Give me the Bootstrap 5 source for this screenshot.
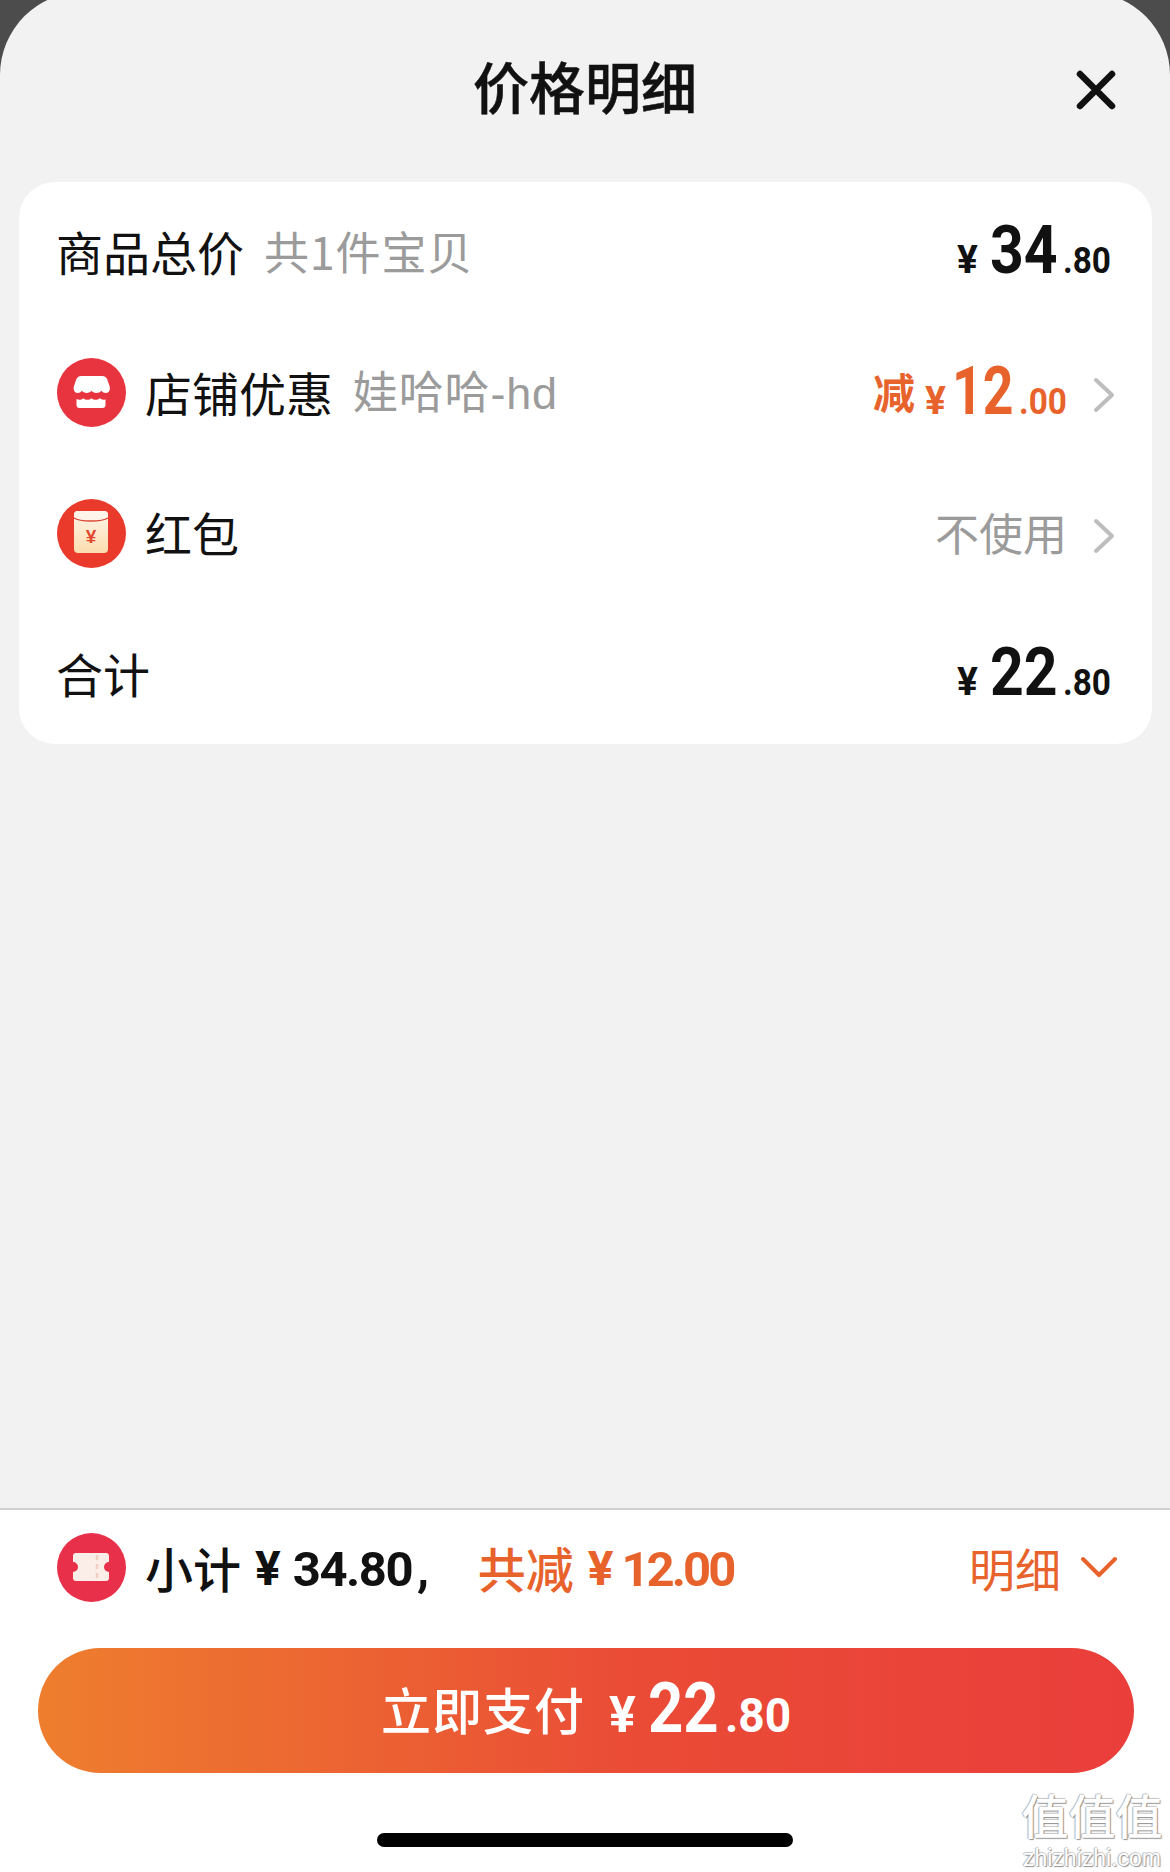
<!DOCTYPE html>
<html lang="zh-CN">
<head>
<meta charset="utf-8">
<title>价格明细</title>
<link href="https://cdn.jsdelivr.net/npm/bootstrap@5.3.0/dist/css/bootstrap.min.css" rel="stylesheet">
<style>
html,body{margin:0;height:1872px;background:#4c4c4c;overflow:hidden}
body{font-family:"Liberation Sans","Noto Sans CJK SC",sans-serif;color:#111}
.pd-sheet{height:1880px;width:1170px;margin-top:-8px;background:#f2f2f2;border-radius:83px 83px 0 0;position:relative}
.pd-head{height:190px;display:grid;grid-template-columns:1fr auto 1fr;padding:8px 0 13px}
.pd-title{font-size:56px;font-weight:500;-webkit-text-stroke:.5px #111;line-height:1;font-family:"Noto Sans CJK SC",sans-serif}
.pd-close{width:40px;height:40px;margin-right:54px;margin-top:10px}
.pd-card{margin:0 18px 0 19px;height:562px;background:#fff;border-radius:36px}
.pd-row{height:140.5px;padding:0 37px 0 38px}
.pd-row.pd-noicon{padding-left:37px;padding-right:41px}
.pd-label{font-size:47px;line-height:1;margin-bottom:3px;font-family:"Noto Sans CJK SC",sans-serif}
.pd-sub{font-size:45px;line-height:1;margin-bottom:3px;color:#9b9b9b;margin-left:20px;letter-spacing:.8px;font-family:"Noto Sans CJK SC",sans-serif}
.pd-sub-latin{font-family:"Liberation Sans",sans-serif}
.pd-icon{width:69px;height:69px;flex:none;margin-right:19px}
.pd-num{font-family:"Roboto",sans-serif;font-weight:700;line-height:1;white-space:nowrap}
.pd-price{margin-bottom:3px}
.pd-yen{font-size:39px;margin-right:12px}
.pd-big{font-size:67px;display:inline-block;transform:scaleX(.88);transform-origin:0 50%;margin-right:-9px}
.pd-big-one{transform:scaleX(.8);margin-right:-15px}
.pd-yen-one{margin-right:6px}
.pd-cents{font-size:37px;display:inline-block;transform:scaleX(.9);transform-origin:0 50%;margin:0 -5px 0 5px}
.pd-orange{color:#e8622c}
.pd-cut{font-size:42px;font-weight:700;line-height:1;margin-right:10px;font-family:"Noto Sans CJK SC",sans-serif}
.pd-chev{width:22px;height:36px;margin:5px 0 0 26px;flex:none}
.pd-muted{font-size:44px;color:#9b9b9b;line-height:1;margin-bottom:3px;font-family:"Noto Sans CJK SC",sans-serif}
.pd-foot{height:364px;background:#fff;border-top:2px solid #d0d0d0;padding-top:21px}
.pd-sum{height:72px;padding:0 53px 0 57px}
.pd-sum-txt{font-size:48px;font-weight:500;line-height:1;font-family:"Noto Sans CJK SC",sans-serif}
.pd-sum-num{font-size:49px;font-weight:700;letter-spacing:-.03em;margin-top:4px}
.pd-sum-comma{margin-left:5px}
.pd-sum-one{letter-spacing:-.06em;margin-left:-4px}
.pd-sum-yen{font-size:48px;font-weight:700;margin:4px 12px 0 14px}
.pd-gap{margin-left:50px}
.pd-detail{font-size:46px;line-height:1;font-family:"Noto Sans CJK SC",sans-serif}
.pd-arrow{margin-left:20px}
.pd-pay{display:flex;align-items:center;justify-content:center;margin:45px 36px 0 38px;height:125px;width:1096px;border:0;border-radius:63px;padding:0 0 6px 0;background:linear-gradient(90deg,#ee7e2e,#ea4b36 55%,#ea3e3b);color:#fff}
.pd-pay-txt{font-size:50px;font-weight:500;line-height:1;letter-spacing:1px;margin-right:24px;font-family:"Noto Sans CJK SC",sans-serif}
.pd-pay-num{font-weight:700}
.pd-pay-yen{font-size:50px;margin-right:12px}
.pd-pay-big{font-size:70px;display:inline-block;transform:scaleX(.88);transform-origin:0 50%;margin-right:-10px}
.pd-pay-cents{font-size:48px;display:inline-block;transform:scaleX(.96);transform-origin:0 50%;margin:0 -3px 0 7px}
.pd-home{width:416px;height:14px;border-radius:7px;background:#000;margin:60px 0 0 377px}
.pd-mark{position:absolute;left:1021px;top:1798px;width:142px;text-align:center;color:#fff;line-height:1;text-shadow:1px 1px 1px #8f8f8f,-1px 0 1px #b5b5b5,0 -1px 1px #c8c8c8}
.pd-mark-cn{font-size:47px;font-family:"Noto Sans CJK SC",sans-serif;font-weight:500;display:block;height:57px}
.pd-mark-en{font-size:23px;font-family:"Liberation Sans",sans-serif;display:block}
</style>
</head>
<body>
<div class="pd-sheet d-flex flex-column">
  <header class="pd-head align-items-center">
    <span></span>
    <div class="pd-title">价格明细</div>
    <div class="d-flex justify-content-end">
      <svg class="pd-close" viewBox="0 0 40 40" aria-label="关闭"><path d="M4 4 36 36M36 4 4 36" stroke="#111" stroke-width="6.500" stroke-linecap="round" fill="none"/></svg>
    </div>
  </header>

  <section class="pd-card">
    <div class="pd-row pd-noicon d-flex align-items-center justify-content-between">
      <div class="d-flex align-items-center"><span class="pd-label">商品总价</span><span class="pd-sub">共1件宝贝</span></div>
      <div class="pd-num pd-price d-flex align-items-baseline"><span class="pd-yen">¥</span><span class="pd-big">34</span><span class="pd-cents">.80</span></div>
    </div>
    <div class="pd-row d-flex align-items-center justify-content-between">
      <div class="d-flex align-items-center">
        <svg class="pd-icon" viewBox="0 0 69 69"><circle cx="34.500" cy="34.500" r="34.500" fill="#e8343f"/><path d="M24 18h21c3 0 4.500 1.500 5.500 4l2 6c1.200 3.500-.5 7-3.500 7-2.200 0-3.300-.8-4.600-2.200-1.400 1.400-2.800 2.200-5.200 2.200s-3.400-.9-4.700-2.200c-1.300 1.300-2.500 2.200-4.800 2.200s-3.500-.9-4.900-2.200c-1.200 1.400-2.200 2.200-4.300 2.200-3 0-4.600-3.500-3.500-7l2-6c1-2.500 2.500-4 5.500-4z" fill="#fff"/><path d="M19.500 41c2.300 1.300 4.700 1 6.800-.7 2.500 2 5.700 2 8.200 0 2.500 2 5.700 2 8.200 0 1.900 1.600 3.900 1.900 5.800.9V47a3 3 0 0 1-3 3H22.500a3 3 0 0 1-3-3z" fill="#fff"/></svg>
        <span class="pd-label">店铺优惠</span><span class="pd-sub">娃哈哈<span class="pd-sub-latin">-hd</span></span>
      </div>
      <div class="d-flex align-items-center">
        <div class="pd-num pd-price pd-orange d-flex align-items-baseline"><span class="pd-cut align-self-center">减</span><span class="pd-yen pd-yen-one">¥</span><span class="pd-big pd-big-one">12</span><span class="pd-cents">.00</span></div>
        <svg class="pd-chev" viewBox="0 0 22 36"><path d="M3 3 19 18 3 33" stroke="#bdbdbd" stroke-width="4" fill="none" stroke-linecap="round" stroke-linejoin="round"/></svg>
      </div>
    </div>
    <div class="pd-row d-flex align-items-center justify-content-between">
      <div class="d-flex align-items-center">
        <svg class="pd-icon" viewBox="0 0 69 69"><defs><linearGradient id="pdCream" x1="0" y1="0" x2="0" y2="1"><stop offset="0" stop-color="#fff6ea"/><stop offset="1" stop-color="#fcdcae"/></linearGradient></defs><circle cx="34.500" cy="34.500" r="34.500" fill="#ea3a2c"/><rect x="17" y="12" width="34" height="42" rx="4" fill="url(#pdCream)"/><path d="M17 19c6 4 28 4 34 0v-3a4 4 0 0 0-4-4H21a4 4 0 0 0-4 4z" fill="#fff4ea"/><path d="M17 19c6 4 28 4 34 0" stroke="#d9412f" stroke-width="1.500" fill="none"/><text x="34" y="44" text-anchor="middle" font-family="Liberation Sans, sans-serif" font-weight="700" font-size="19" fill="#e2472f">¥</text></svg>
        <span class="pd-label">红包</span>
      </div>
      <div class="d-flex align-items-center">
        <span class="pd-muted">不使用</span>
        <svg class="pd-chev" viewBox="0 0 22 36"><path d="M3 3 19 18 3 33" stroke="#bdbdbd" stroke-width="4" fill="none" stroke-linecap="round" stroke-linejoin="round"/></svg>
      </div>
    </div>
    <div class="pd-row pd-noicon d-flex align-items-center justify-content-between">
      <span class="pd-label">合计</span>
      <div class="pd-num pd-price d-flex align-items-baseline"><span class="pd-yen">¥</span><span class="pd-big">22</span><span class="pd-cents">.80</span></div>
    </div>
  </section>

  <div class="flex-grow-1"></div>

  <footer class="pd-foot">
    <div class="pd-sum d-flex align-items-center justify-content-between">
      <div class="d-flex align-items-center">
        <svg class="pd-icon" viewBox="0 0 69 69"><circle cx="34.500" cy="34.500" r="34.500" fill="#e9304a"/><path d="M19 20h30a3 3 0 0 1 3 3v6a5 5 0 0 0 0 10v6a3 3 0 0 1-3 3H19a3 3 0 0 1-3-3v-6a5 5 0 0 0 0-10v-6a3 3 0 0 1 3-3z" fill="#fbeee8"/><path d="M40 22v24" stroke="#f0cfc2" stroke-width="2.500" stroke-dasharray="5 4" fill="none"/></svg>
        <span class="pd-sum-txt">小计</span><span class="pd-num pd-sum-yen">¥</span><span class="pd-num pd-sum-num">34.80</span><span class="pd-num pd-sum-num pd-sum-comma">,</span>
        <span class="pd-sum-txt pd-orange pd-gap">共减</span><span class="pd-num pd-sum-yen pd-orange">¥</span><span class="pd-num pd-sum-num pd-sum-one pd-orange">12.00</span>
      </div>
      <div class="d-flex align-items-center pd-orange">
        <span class="pd-detail">明细</span>
        <svg class="pd-arrow" width="36" height="22" viewBox="0 0 36 22"><path d="M2 3 18 19 34 3" stroke="#e8622c" stroke-width="4" fill="none" stroke-linecap="round" stroke-linejoin="round"/></svg>
      </div>
    </div>
    <button type="button" class="btn pd-pay">
      <span class="pd-pay-txt">立即支付</span>
      <span class="pd-num pd-pay-num d-flex align-items-baseline"><span class="pd-pay-yen">¥</span><span class="pd-pay-big">22</span><span class="pd-pay-cents">.80</span></span>
    </button>
    <div class="pd-home"></div>
  </footer>

  <div class="pd-mark"><span class="pd-mark-cn">值值值</span><span class="pd-mark-en">zhizhizhi.com</span></div>
</div>
<script src="https://cdn.jsdelivr.net/npm/bootstrap@5.3.0/dist/js/bootstrap.bundle.min.js"></script>
</body>
</html>
